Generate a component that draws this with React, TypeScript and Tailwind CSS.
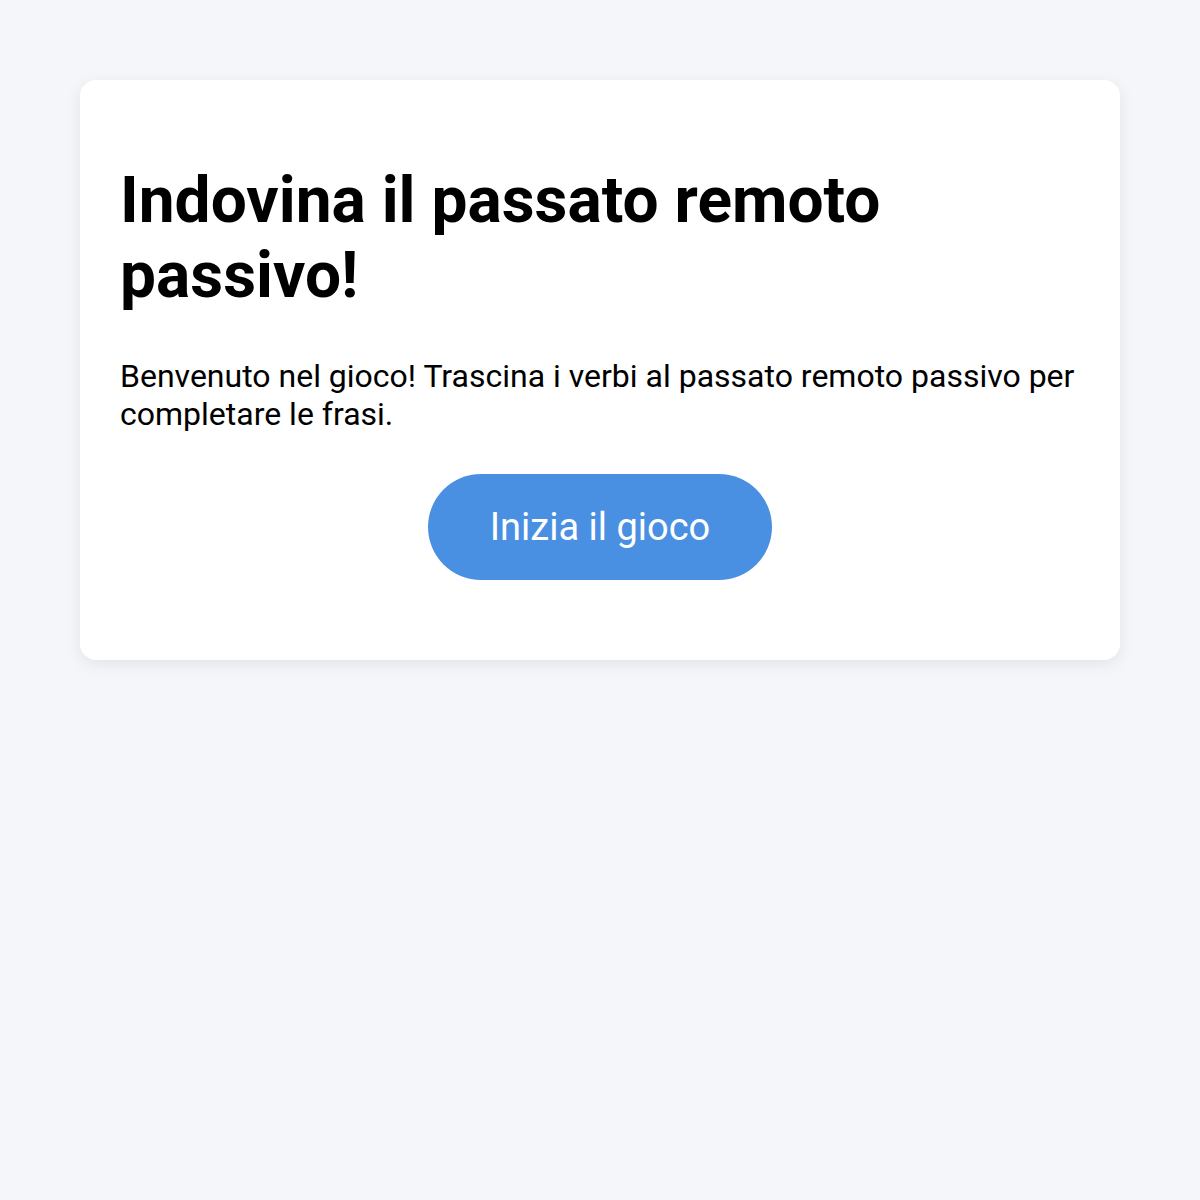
export default function App() {
  return (
    <div className="min-h-[1200px] w-full bg-[#f4f6fa] pt-20 px-20" style={{ fontFamily: 'Roboto, "Liberation Sans", sans-serif' }}>
      <div className="bg-white rounded-2xl shadow-[0_4px_16px_rgba(0,0,0,0.08)] px-10 pt-[83px] pb-20 flex flex-col">
        {/* Titolo */}
        <h1 className="text-[64px] leading-[75px] font-bold text-black">
          Indovina il passato remoto passivo!
        </h1>
        {/* Descrizione */}
        <p className="mt-[45px] text-[32px] leading-[37.5px] text-black">
          Benvenuto nel gioco! Trascina i verbi al passato remoto passivo per completare le frasi.
        </p>
        <div className="mt-[41px] flex justify-center">
          <button className="w-[344px] h-[106px] rounded-full bg-[#4a90e2] text-white text-[38px]">
            Inizia il gioco
          </button>
        </div>
      </div>
    </div>
  );
}
